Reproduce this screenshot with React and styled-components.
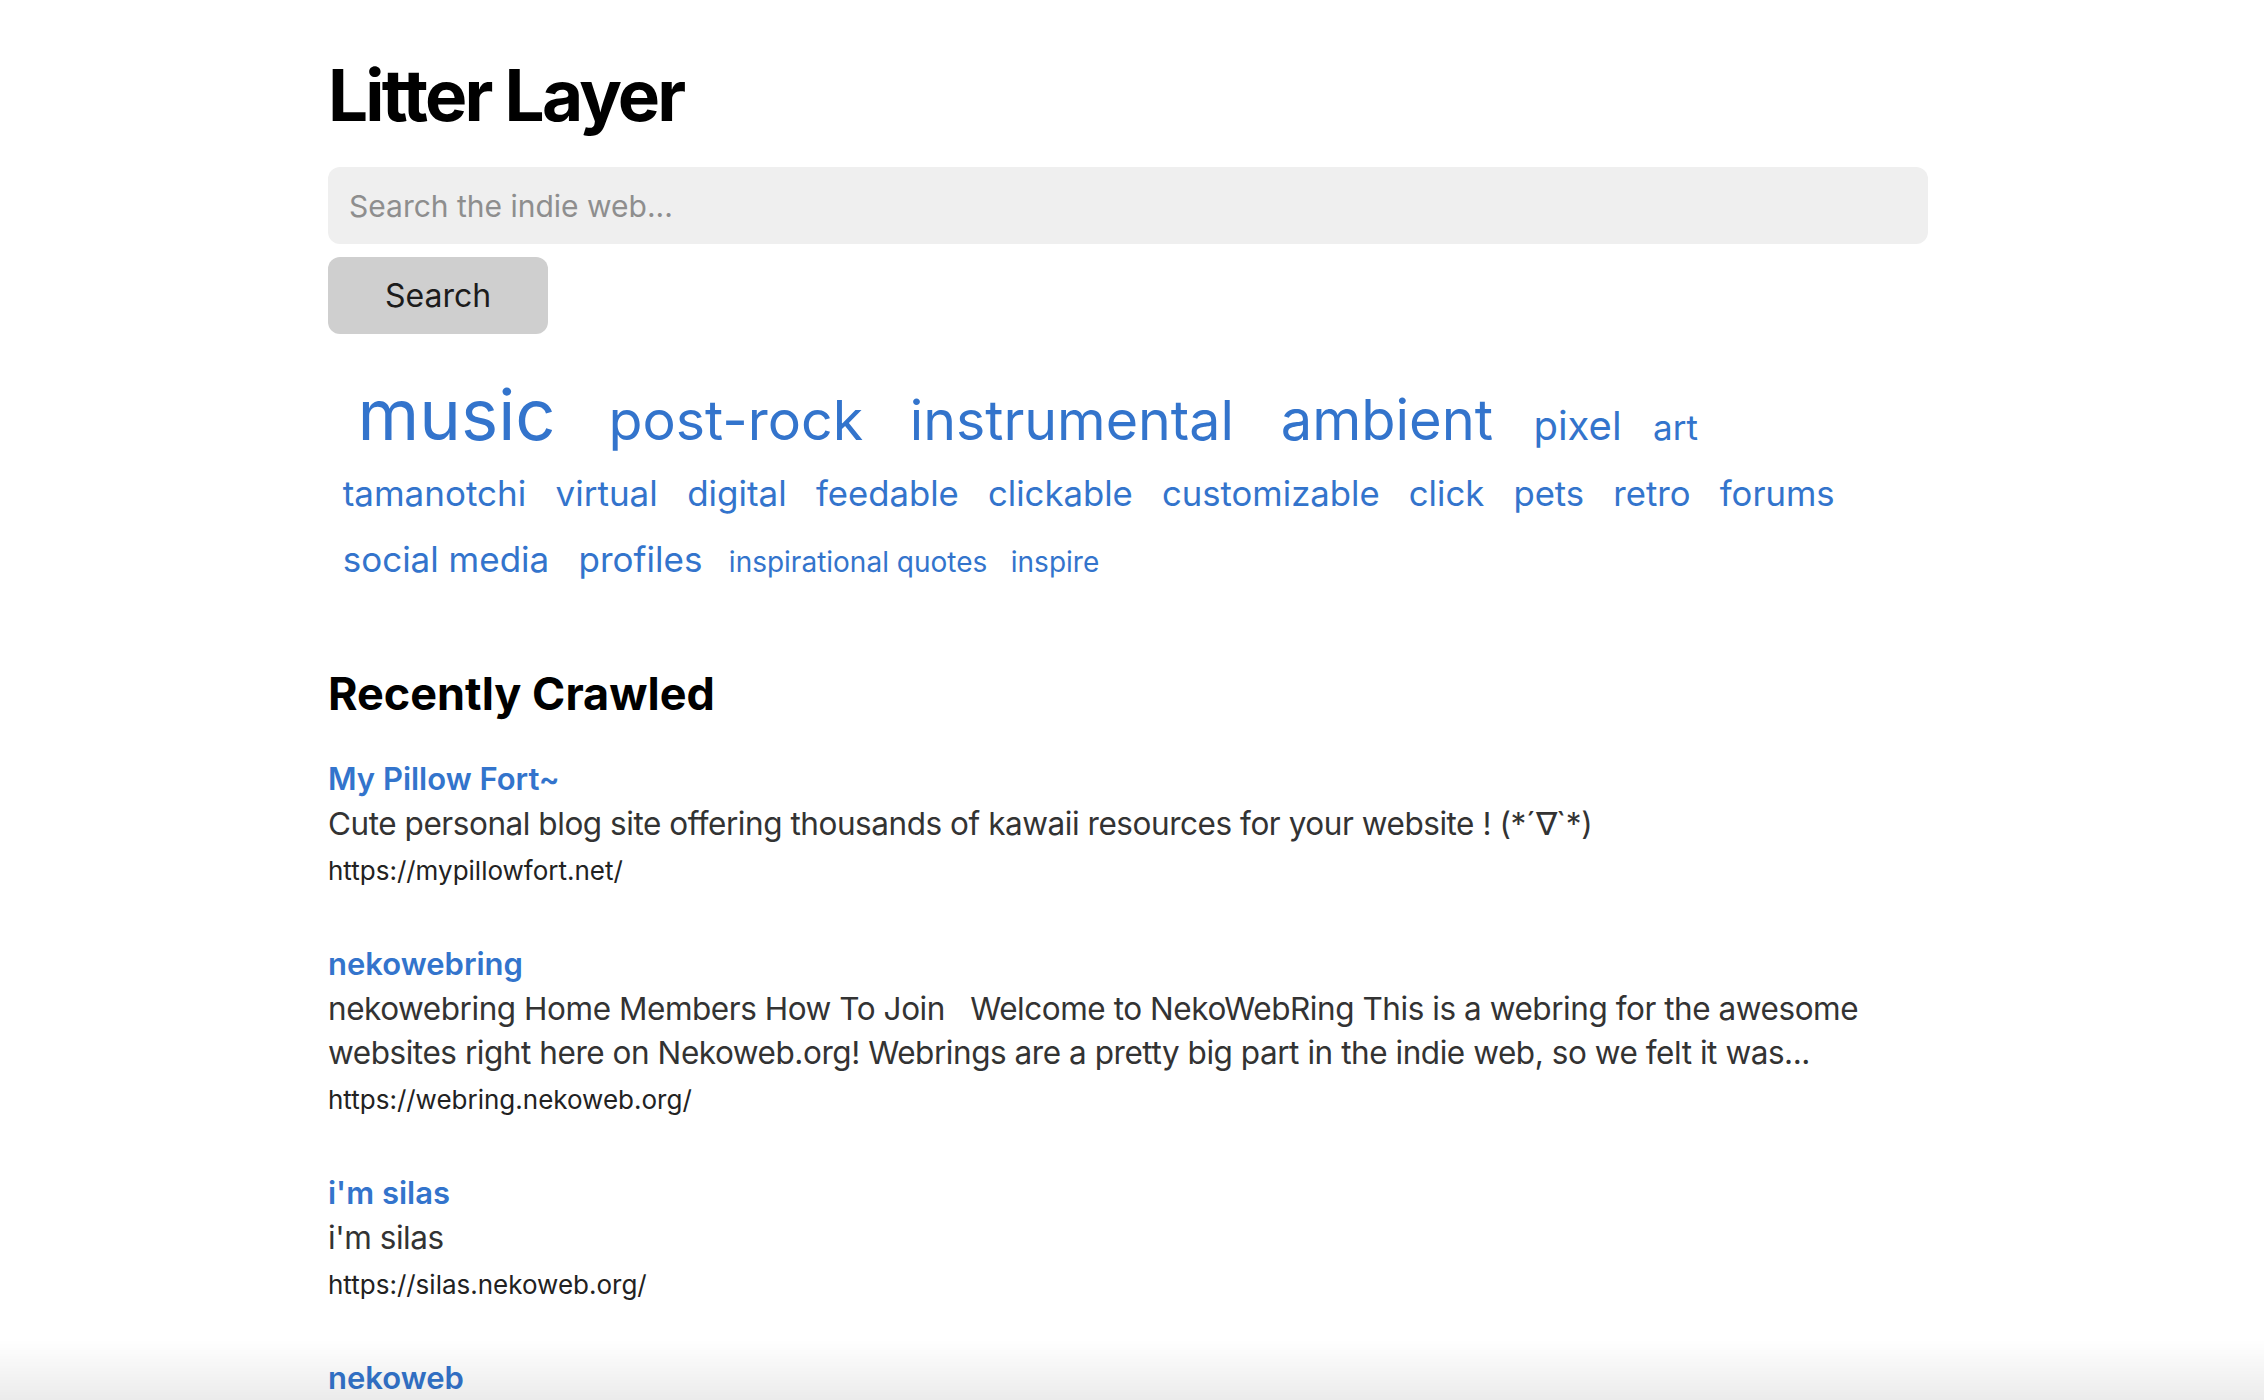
import styled, { createGlobalStyle } from "styled-components";

const GlobalStyle = createGlobalStyle`
  body {
    margin: 0;
    background: #ffffff;
    font-family: Inter, "Noto Sans", sans-serif;
    color: #333333;
  }
`;

const tags = [
    { name: "music", size: 70.5 },
    { name: "post-rock", size: 55.5 },
    { name: "instrumental", size: 55.5 },
    { name: "ambient", size: 56 },
    { name: "pixel", size: 40 },
    { name: "art", size: 35 },
    { name: "tamanotchi", size: 35 },
    { name: "virtual", size: 35 },
    { name: "digital", size: 35 },
    { name: "feedable", size: 34.7 },
    { name: "clickable", size: 34.7 },
    { name: "customizable", size: 34.7 },
    { name: "click", size: 34.7 },
    { name: "pets", size: 34.7 },
    { name: "retro", size: 34.7 },
    { name: "forums", size: 34.7 },
    { name: "social media", size: 35 },
    { name: "profiles", size: 35 },
    { name: "inspirational quotes", size: 28 },
    { name: "inspire", size: 28 },
];

const sites = [
    {
        title: "My Pillow Fort~",
        description: "Cute personal blog site offering thousands of kawaii resources for your website ! (*´∇`*)",
        url: "https://mypillowfort.net/",
    },
    {
        title: "nekowebring",
        description: "nekowebring Home Members How To Join\u00a0\u00a0 Welcome to NekoWebRing This is a webring for the awesome websites right here on Nekoweb.org! Webrings are a pretty big part in the indie web, so we felt it was...",
        url: "https://webring.nekoweb.org/",
    },
    {
        title: "i'm silas",
        description: "i'm silas",
        url: "https://silas.nekoweb.org/",
    },
    {
        title: "nekoweb",
    },
];

export default function App() {
    return (
        <>
            <GlobalStyle />
            <Page>
                <Main>
                    <Titulo>Litter Layer</Titulo>
                    <SearchForm onSubmit={(e) => e.preventDefault()}>
                        <SearchInput placeholder="Search the indie web..." />
                        <SearchButton type="submit">Search</SearchButton>
                    </SearchForm>

                    <TagCloud>
                        {tags.map((tag) => (
                            <Tag key={tag.name} href="#" $size={tag.size}>
                                {tag.name}
                            </Tag>
                        ))}
                    </TagCloud>

                    <Secao>Recently Crawled</Secao>
                    <Lista>
                        {sites.map((site) => (
                            <Resultado key={site.title}>
                                <SiteTitulo href="#">{site.title}</SiteTitulo>
                                {site.description && <Descricao>{site.description}</Descricao>}
                                {site.url && <Endereco>{site.url}</Endereco>}
                            </Resultado>
                        ))}
                    </Lista>
                </Main>
            </Page>
            <Sombra />
        </>
    );
}

const Page = styled.div`
padding: 59px 328px 80px 328px;
`

const Main = styled.main`
max-width: 1600px;
`

const Titulo = styled.h1`
margin: 0;
font-size: 71px;
line-height: 72px;
font-weight: 700;
letter-spacing: -2.8px;
color: #000000;
`

const SearchForm = styled.form`
display: flex;
flex-direction: column;
align-items: flex-start;
gap: 13px;
margin-top: 36px;
`

const SearchInput = styled.input`
box-sizing: border-box;
width: 100%;
height: 77px;
padding: 0 21px;
border: none;
border-radius: 12px;
background: #efefef;
font-family: Inter, "Noto Sans", sans-serif;
font-size: 30px;
color: #222222;
outline: none;

&::placeholder {
    color: #8e8e8e;
}
`

const SearchButton = styled.button`
box-sizing: border-box;
width: 220px;
height: 77px;
border: none;
border-radius: 12px;
background: #cfcfcf;
font-family: Inter, "Noto Sans", sans-serif;
font-size: 32px;
color: #1c1c1c;
cursor: pointer;
`

const TagCloud = styled.div`
display: flex;
flex-wrap: wrap;
align-items: baseline;
max-width: 1540px;
margin-top: 48px;
`

const Tag = styled.a`
font-size: ${(p) => p.$size}px;
line-height: 66px;
margin: 0 0.42em;
color: #3374cc;
text-decoration: none;
white-space: nowrap;
`

const Secao = styled.h2`
margin: 73px 0 0 0;
font-size: 45px;
line-height: 52.8px;
font-weight: 700;
color: #000000;
`

const Lista = styled.div`
display: flex;
flex-direction: column;
gap: 47px;
margin-top: 35px;
`

const Resultado = styled.div`
display: flex;
flex-direction: column;
align-items: flex-start;
`

const SiteTitulo = styled.a`
font-size: 31px;
line-height: 46px;
font-weight: 600;
color: #3374cc;
text-decoration: none;
`

const Descricao = styled.p`
margin: 0;
font-size: 31.5px;
line-height: 44px;
letter-spacing: -0.45px;
color: #333333;
`

const Endereco = styled.div`
margin-top: 2px;
font-size: 26px;
line-height: 46px;
color: #222222;
`

const Sombra = styled.div`
position: fixed;
left: 0;
right: 0;
bottom: 0;
height: 60px;
pointer-events: none;
background: linear-gradient(rgba(0, 0, 0, 0), rgba(0, 0, 0, 0.08));
`
